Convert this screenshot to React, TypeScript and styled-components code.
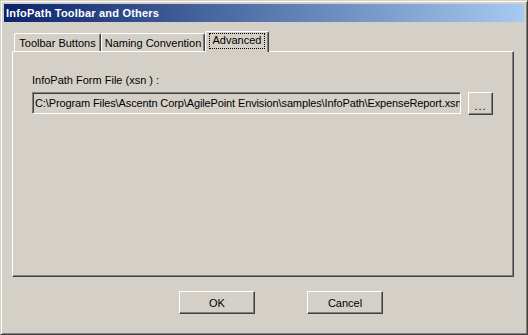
import React from 'react';
import styled, {createGlobalStyle} from 'styled-components';

const GlobalStyle = createGlobalStyle`
  html, body {
    margin: 0;
    padding: 0;
    background: #d4d0c8;
  }
  body {
    font-family: "Liberation Sans", Arial, sans-serif;
    font-size: 11px;
    color: #000;
  }
`

const Window = styled.div`
  width: 528px;
  height: 335px;
  box-sizing: border-box;
  display: flex;
  flex-direction: column;
  background: #d4d0c8;
  border: 1px solid;
  border-color: #d4d0c8 #404040 #404040 #d4d0c8;
  box-shadow: inset 1px 1px #fff, inset -1px -1px #808080;
  padding: 3px;
`

const TitleBar = styled.div`
  height: 18px;
  flex: 0 0 18px;
  display: flex;
  align-items: center;
  padding-left: 2px;
  background: linear-gradient(to right, #0a246a, #a6caf0);
  color: #fff;
  font-weight: bold;
  font-size: 11px;
  letter-spacing: 0.2px;
  white-space: nowrap;
`

const Body = styled.div`
  flex: 1;
  display: flex;
  flex-direction: column;
  padding: 9px 10px 0 8px;
`

const TabRow = styled.div`
  display: flex;
  align-items: flex-end;
  height: 20px;
  padding-left: 2px;
  position: relative;
  z-index: 1;
`

const Tab = styled.div<{ $width: number; $active?: boolean }>`
  box-sizing: border-box;
  width: ${p => p.$width}px;
  height: ${p => (p.$active ? 21 : 18)}px;
  margin-bottom: ${p => (p.$active ? -1 : 0)}px;
  display: flex;
  align-items: ${p => (p.$active ? 'flex-start' : 'center')};
  justify-content: center;
  padding-top: ${p => (p.$active ? 2 : 0)}px;
  background: #d4d0c8;
  border-top: 1px solid #fff;
  border-left: 1px solid #fff;
  border-right: 1px solid #404040;
  box-shadow: inset -1px 0 #808080;
  border-radius: 2px 2px 0 0;
  white-space: nowrap;
`

const FocusLabel = styled.span`
  outline: 1px dotted #000;
  padding: 0 3px 1px;
  line-height: 13px;
`

const Panel = styled.div`
  box-sizing: border-box;
  height: 226px;
  flex: 0 0 226px;
  border: 1px solid;
  border-color: #fff #404040 #404040 #fff;
  box-shadow: inset -1px -1px #808080;
  padding: 22px 20px 0 19px;
`

const FieldLabel = styled.div`
  line-height: 13px;
  margin-bottom: 5px;
`

const FieldRow = styled.div`
  display: flex;
  align-items: flex-start;
  gap: 7px;
`

const PathInput = styled.input`
  box-sizing: border-box;
  width: 431px;
  height: 22px;
  margin: 0;
  padding: 0 0 0 2px;
  font-family: "Liberation Sans", Arial, sans-serif;
  font-size: 11px;
  letter-spacing: -0.12px;
  color: #000;
  background: #d4d0c8;
  border: 1px solid;
  border-color: #808080 #fff #fff #808080;
  box-shadow: inset 1px 1px #404040, inset -1px -1px #d4d0c8;
  outline: none;
`

const Button = styled.button<{ $width: number; $height: number }>`
  box-sizing: border-box;
  width: ${p => p.$width}px;
  height: ${p => p.$height}px;
  margin: 0;
  padding: 0;
  font-family: "Liberation Sans", Arial, sans-serif;
  font-size: 11px;
  color: #000;
  background: #d4d0c8;
  border: 1px solid;
  border-color: #fff #404040 #404040 #fff;
  box-shadow: inset -1px -1px #808080;
  display: flex;
  align-items: center;
  justify-content: center;
`

const Dots = styled.span`
  padding-top: 4px;
  letter-spacing: 1px;
`

const Footer = styled.div`
  display: flex;
  gap: 52px;
  padding: 14px 0 0 167px;
`

const path = "C:\\Program Files\\Ascentn Corp\\AgilePoint Envision\\samples\\InfoPath\\ExpenseReport.xsn";

const App = () => {
    return (
        <>
            <GlobalStyle/>
            <Window>
                <TitleBar>InfoPath Toolbar and Others</TitleBar>
                <Body>
                    <TabRow>
                        <Tab $width={87}>Toolbar Buttons</Tab>
                        <Tab $width={104}>Naming Convention</Tab>
                        <Tab $width={64} $active><FocusLabel>Advanced</FocusLabel></Tab>
                    </TabRow>
                    <Panel>
                        <FieldLabel>InfoPath Form File (xsn ) :</FieldLabel>
                        <FieldRow>
                            <PathInput readOnly value={path}/>
                            <Button $width={25} $height={23}><Dots>...</Dots></Button>
                        </FieldRow>
                    </Panel>
                    <Footer>
                        <Button $width={76} $height={23}>OK</Button>
                        <Button $width={76} $height={23}>Cancel</Button>
                    </Footer>
                </Body>
            </Window>
        </>
    );
};

export default App;
